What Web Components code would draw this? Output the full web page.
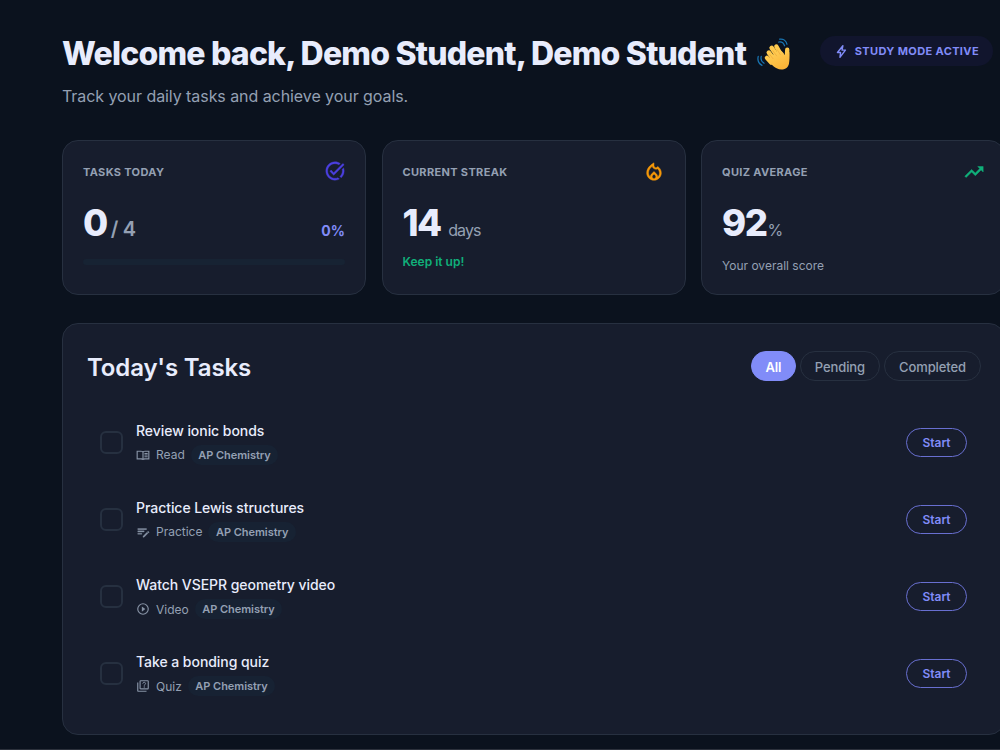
<!DOCTYPE html>
<html lang="en">
<head>
<meta charset="utf-8">
<title>Study Dashboard</title>
<style>
  :root {
    --bg: #0b121e;
    --card: #171d2d;
    --line: #273040;
    --text: #e8ecfc;
    --muted: #94a0b3;
    --accent: #818cf8;
    --chip: #172233;
    --green: #10b07a;
  }
  html, body { margin: 0; height: 750px; overflow: hidden; background: var(--bg); }
  body { font-family: Inter, "Liberation Sans", sans-serif; color: var(--text); }
</style>
</head>
<body>
<study-dashboard>
  <welcome-header slot="header" heading="Welcome back, Demo Student, Demo Student">
    Track your daily tasks and achieve your goals.
    <status-badge slot="badge">Study mode active</status-badge>
  </welcome-header>

  <stat-card slot="stats" label="Tasks today" icon="check" color="#4b3fe0" value="0">
    <span slot="unit" style="font-size:20px;font-weight:600;margin-left:4px;letter-spacing:-.3px">/ 4</span>
    <span slot="side">0%</span>
    <progress-track slot="footer"></progress-track>
  </stat-card>
  <stat-card slot="stats" label="Current streak" icon="fire" color="#f59708" value="14">
    <span slot="unit" style="margin-left:7.5px">days</span>
    <span slot="footer" style="color:var(--green);font-weight:600;line-height:19px;font-size:12px">Keep it up!</span>
  </stat-card>
  <stat-card slot="stats" label="Quiz average" icon="trend" color="#10b07a" value="92">
    <span slot="unit" style="margin-left:1px">%</span>
    <span slot="footer" style="line-height:19px;padding-top:4px;font-size:12px">Your overall score</span>
  </stat-card>

  <task-panel slot="tasks" heading="Today's Tasks">
    <filter-pill slot="filters" active>All</filter-pill>
    <filter-pill slot="filters">Pending</filter-pill>
    <filter-pill slot="filters">Completed</filter-pill>
    <task-row icon="book" kind="Read" subject="AP Chemistry">Review ionic bonds</task-row>
    <task-row icon="note" kind="Practice" subject="AP Chemistry">Practice Lewis structures</task-row>
    <task-row icon="play" kind="Video" subject="AP Chemistry">Watch VSEPR geometry video</task-row>
    <task-row icon="quiz" kind="Quiz" subject="AP Chemistry">Take a bonding quiz</task-row>
  </task-panel>
</study-dashboard>

<script>
const ICONS = {
  bolt: '<path d="M14.200 2.800 5.500 13.600h5l-1 7.600 8.800-11.400h-5.400z" fill="none" stroke="currentColor" stroke-width="2.200" stroke-linejoin="round"/>',
  check: '<path fill="currentColor" d="M22 5.180 10.590 16.600l-4.240-4.240 1.410-1.410 2.830 2.830 10-10L22 5.180zM12 20c-4.410 0-8-3.590-8-8s3.590-8 8-8c1.570 0 3.040.46 4.280 1.250l1.450-1.450C16.100 2.670 14.130 2 12 2 6.480 2 2 6.480 2 12s4.480 10 10 10c1.730 0 3.360-.44 4.780-1.220l-1.500-1.500c-1 .46-2.110.72-3.280.72zm7.800-9.780c.13.57.2 1.170.2 1.780 0 2.350-1.020 4.460-2.640 5.930l1.420 1.420C20.760 17.520 22 14.910 22 12c0-1.190-.21-2.330-.59-3.390z" stroke="currentColor" stroke-width=".4"/>',
  fire: '<path fill="currentColor" stroke="currentColor" stroke-width=".5" d="m16 6-.44.55C14.380 8.020 12 7.190 12 5.300V2S4 6 4 13c0 4.420 3.580 8 8 8s8-3.580 8-8c0-2.960-1.610-5.620-4-7zm-4 13c-1.100 0-2-.87-2-1.940 0-.51.2-.99.58-1.360L12 14.300l1.430 1.400c.37.37.57.85.57 1.360 0 1.070-.9 1.940-2 1.940zm3.960-1.500.04-.44c0-1.060-.42-2.040-1.180-2.790L12 11.500l-2.820 2.770A3.900 3.900 0 0 0 8 17.060l.04.44A5.960 5.960 0 0 1 6 13c0-3.160 2.130-5.650 4.030-7.250a3.970 3.970 0 0 0 5.860 2.660A6.080 6.080 0 0 1 18 13c0 1.790-.79 3.400-2.040 4.500z"/>',
  trend: '<path fill="currentColor" stroke="currentColor" stroke-width=".5" d="m16 6 2.290 2.290-4.880 4.880-4-4L2 16.590 3.410 18l6-6 4 4 6.300-6.290L22 12V6z"/>',
  book: '<path fill="currentColor" d="M1 4.500h7.500c1.500 0 2.700.3 3.500.9.8-.6 2-.9 3.500-.9H23v15h-7.500c-1.300 0-2.300.3-3.500 1-1.200-.7-2.200-1-3.500-1H1zm2 2v11h5.500c.9 0 1.700.1 2.500.4V7.200C10.300 6.700 9.500 6.500 8.500 6.500zm12.500 0c-1 0-1.800.2-2.500.7v10.700c.8-.3 1.600-.4 2.500-.4H21v-11zM14.500 8.500H20v1.700h-5.500zm0 2.800H20V13h-5.500zm0 2.800H20v1.700h-5.500z"/>',
  note: '<path fill="currentColor" d="M3 10h11v2H3zm0-4h15v2H3zm0 8h7v2H3zm17.100-2.900c.4-.4 1-.4 1.400 0l.7.7c.4.4.4 1 0 1.400l-.7.7-2.100-2.100zm-1.400 1.400L12 19.200V21h1.900l6.700-6.700z" stroke="currentColor" stroke-width=".5"/>',
  play: '<path fill="currentColor" d="m10 16.500 6-4.500-6-4.500zM12 2a10 10 0 1 0 0 20 10 10 0 0 0 0-20zm0 18a8 8 0 1 1 0-16 8 8 0 0 1 0 16z"/>',
  quiz: '<path fill="currentColor" d="M4 6H2v14c0 1.100.9 2 2 2h14v-2H4zm16-4H8a2 2 0 0 0-2 2v12c0 1.100.9 2 2 2h12a2 2 0 0 0 2-2V4a2 2 0 0 0-2-2zm0 14H8V4h12z"/><path d="M11.700 8c0-3 4.700-3 4.700-.2 0 1.600-2.300 1.700-2.300 3.700" fill="none" stroke="currentColor" stroke-width="1.700"/><circle cx="14.100" cy="13.700" r="1.100" fill="currentColor"/>'
};

const WAVE = `
<svg viewBox="0 0 36 36">
  <defs><linearGradient id="skin" x1="0" y1="0" x2=".6" y2="1"><stop stop-color="#ffd35c"/><stop offset="1" stop-color="#fbb437"/></linearGradient></defs>
  <g fill="none" stroke="#ffca4d" stroke-linecap="round">
    <path stroke-width="4.600" d="m15 27-4.500-5"/>
    <path stroke-width="4.800" d="m19 25-6.500-8.500"/>
    <path stroke-width="4.800" d="m22 21-6.500-9.500"/>
    <path stroke-width="4.600" d="m26 20-5.500-10"/>
    <path stroke-width="4.600" d="M31.500 24 32 13.500"/>
  </g>
  <path fill="url(#skin)" d="m11 23.500 13-10c2 1 4.500 3.500 5.300 5.500l4.900-3c.4 4 .3 9-.4 12.500-1.500 5.800-8 7.300-13 4.500-4-2.200-8.300-6-9.800-9.500z"/>
  <path d="m13.500 18.500 3.500 4.500M16.800 14.500l4 5.500M21.500 13.500l3 5" fill="none" stroke="#eba238" stroke-width=".6" stroke-linecap="round"/>
  <path d="M23 5.300c3-.6 5.200 1 6.200 4M24 2.300c4-.6 7 1.800 7.800 5.400M4.500 20.500c-.8 3 .5 5.700 3 7.200M1.300 20.500c-1 4.300.8 7.800 4 9.500" fill="none" stroke="#1976b4" stroke-width="1.300" stroke-linecap="round"/>
</svg>`;

function icon(name) {
  return `<svg class="${name}" viewBox="0 0 24 24">${ICONS[name] || ''}</svg>`;
}

class BaseElement extends HTMLElement {
  constructor() {
    super();
    this.attachShadow({ mode: 'open' });
  }

  connectedCallback() {
    this.render();
  }

  attr(name) {
    return this.getAttribute(name) || '';
  }
}

class StudyDashboard extends BaseElement {
  render() {
    this.shadowRoot.innerHTML = `
      <style>
        :host {
          display: block;
          box-sizing: border-box;
          width: 100%;
          height: 750px;
          padding: 36px 0 0 62px;
          overflow: hidden;
        }
        .content { width: 943px; height: 699px; }
        .stats {
          display: grid;
          grid-template-columns: repeat(3, 304px);
          gap: 15.500px;
          margin: 33px 0 28px;
        }
        .edge { margin: 14px 0 0 -62px; height: 1px; background: #2c313c; }
      </style>
      <div class="content">
        <slot name="header"></slot>
        <div class="stats"><slot name="stats"></slot></div>
        <slot name="tasks"></slot>
      </div>
      <div class="edge"></div>
    `;
  }
}

class WelcomeHeader extends BaseElement {
  render() {
    this.shadowRoot.innerHTML = `
      <style>
        :host { display: flex; justify-content: space-between; width: 931px; height: 71px; }
        h1 {
          display: flex;
          margin: 0;
          font-size: 32px;
          line-height: 36px;
          font-weight: 800;
          letter-spacing: -0.8px;
          white-space: nowrap;
        }
        svg { width: 34px; height: 34px; margin: 1px 0 0 11px; }
        p { margin: 12px 0 0; font-size: 16px; line-height: 24px; letter-spacing: -.065px; color: var(--muted); }
      </style>
      <div>
        <h1><span>${this.attr('heading')}</span>${WAVE}</h1>
        <p><slot></slot></p>
      </div>
      <slot name="badge"></slot>
    `;
  }
}

class StatusBadge extends BaseElement {
  render() {
    this.shadowRoot.innerHTML = `
      <style>
        :host {
          display: flex;
          align-items: center;
          box-sizing: border-box;
          height: 30px;
          padding: 0 14px 0 14px;
          border-radius: 15px;
          background: #11152d;
          color: var(--accent);
          font-size: 11px;
          font-weight: 700;
          letter-spacing: .38px;
          text-transform: uppercase;
          white-space: nowrap;
        }
        svg { width: 15px; height: 15px; margin-right: 6px; }
      </style>
      ${icon('bolt')}<span><slot></slot></span>
    `;
  }
}

class StatCard extends BaseElement {
  render() {
    this.shadowRoot.innerHTML = `
      <style>
        :host {
          display: block;
          box-sizing: border-box;
          height: 155px;
          padding: 19px 20px;
          border: 1px solid var(--line);
          border-radius: 16px;
          background: var(--card);
          color: var(--muted);
        }
        .top, .main { display: flex; justify-content: space-between; }
        .top { align-items: center; height: 24px; }
        .label { font-size: 11px; font-weight: 700; letter-spacing: .34px; text-transform: uppercase; }
        svg { display: block; width: 22px; height: 22px; margin: 0 -.5px 0 0; color: ${this.attr('color')}; }
        svg.check { margin-bottom: 2px; }
        .main { align-items: baseline; margin-top: 15px; height: 48px; line-height: 48px; }
        .value { font-size: 36.500px; font-weight: 800; color: var(--text); letter-spacing: -1.500px; }
        ::slotted([slot=unit]) { font-size: 16px; letter-spacing: -.95px; }
        ::slotted([slot=side]) { font-size: 14px; font-weight: 700; color: var(--accent); }
        ::slotted([slot=footer]) { display: block; margin-top: 5px; }
      </style>
      <div class="top"><span class="label">${this.attr('label')}</span>${icon(this.attr('icon'))}</div>
      <div class="main">
        <div><span class="value">${this.attr('value')}</span><slot name="unit"></slot></div>
        <slot name="side"></slot>
      </div>
      <slot name="footer"></slot>
    `;
  }
}

class ProgressTrack extends BaseElement {
  render() {
    this.shadowRoot.innerHTML = `
      <style>
        :host { display: block; padding-top: 7px; }
        div { height: 6px; border-radius: 3px; background: #172333; }
      </style>
      <div></div>
    `;
  }
}

class TaskPanel extends BaseElement {
  render() {
    this.shadowRoot.innerHTML = `
      <style>
        :host {
          display: block;
          box-sizing: border-box;
          height: 412px;
          padding: 27px 23px 0 24px;
          border: 1px solid var(--line);
          border-radius: 16px;
          background: var(--card);
        }
        .head { display: flex; justify-content: space-between; height: 52.400px; }
        h2 { margin: 0; font-size: 24px; line-height: 33px; font-weight: 600; letter-spacing: -.14px; }
        .filters { display: flex; gap: 4px; }
      </style>
      <div class="head">
        <h2>${this.attr('heading')}</h2>
        <div class="filters"><slot name="filters"></slot></div>
      </div>
      <slot></slot>
    `;
  }
}

class FilterPill extends BaseElement {
  render() {
    this.shadowRoot.innerHTML = `
      <style>
        :host {
          display: block;
          box-sizing: border-box;
          height: 30px;
          padding: 0 14px;
          border: 1px solid var(--line);
          border-radius: 15px;
          color: var(--muted);
          font-size: 13px;
          font-weight: 500;
          letter-spacing: -.1px;
          line-height: 30px;
        }
        :host([active]) { padding: 0 13.500px; background: var(--accent); border-color: var(--accent); color: #fff; font-weight: 600; }
      </style>
      <slot></slot>
    `;
  }
}

class TaskRow extends BaseElement {
  render() {
    this.shadowRoot.innerHTML = `
      <style>
        :host { display: flex; align-items: center; height: 77.250px; padding: 0 14px 0 13px; }
        .box { box-sizing: border-box; width: 23px; height: 23px; border: 2px solid #263040; border-radius: 6px; }
        .info { flex: 1; margin-left: 13px; }
        .title { font-size: 14px; line-height: 22px; font-weight: 500; letter-spacing: -.05px; }
        .meta { display: flex; align-items: center; height: 20px; margin-top: 3px; color: var(--muted); font-size: 12px; }
        svg { width: 14px; height: 14px; margin-right: 6px; opacity: .9; }
        .subject { margin-left: 6px; padding: 0 7.500px; border-radius: 10px; background: var(--chip); font-size: 11px; font-weight: 600; line-height: 20px; letter-spacing: -.04px; }
        button {
          box-sizing: border-box;
          width: 61px;
          height: 29px;
          padding: 0;
          border: 1px solid #686fd0;
          border-radius: 15px;
          background: none;
          color: var(--accent);
          font: 600 12px Inter, sans-serif;
        }
      </style>
      <div class="box"></div>
      <div class="info">
        <div class="title"><slot></slot></div>
        <div class="meta">${icon(this.attr('icon'))}<span>${this.attr('kind')}</span><span class="subject">${this.attr('subject')}</span></div>
      </div>
      <button>Start</button>
    `;
  }
}

customElements.define('study-dashboard', StudyDashboard);
customElements.define('welcome-header', WelcomeHeader);
customElements.define('status-badge', StatusBadge);
customElements.define('stat-card', StatCard);
customElements.define('progress-track', ProgressTrack);
customElements.define('task-panel', TaskPanel);
customElements.define('filter-pill', FilterPill);
customElements.define('task-row', TaskRow);
</script>
</body>
</html>
